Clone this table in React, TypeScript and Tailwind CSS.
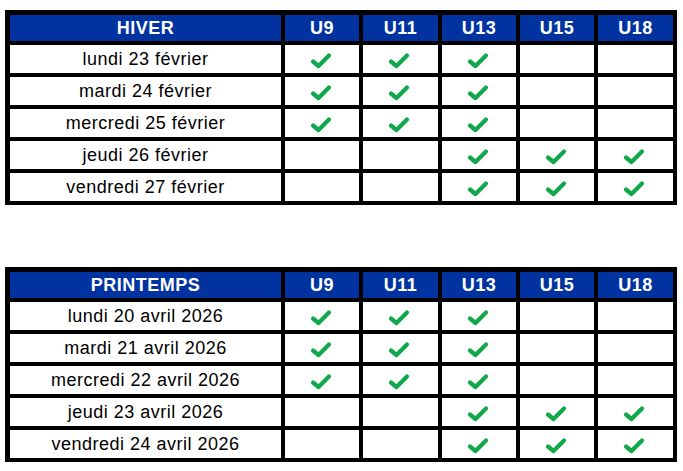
import { Fragment } from "react";

const seasons = [
  {
    title: "HIVER",
    rows: [
      { label: "lundi 23 février", days: [true, true, true, false, false] },
      { label: "mardi 24 février", days: [true, true, true, false, false] },
      { label: "mercredi 25 février", days: [true, true, true, false, false] },
      { label: "jeudi 26 février", days: [false, false, true, true, true] },
      { label: "vendredi 27 février", days: [false, false, true, true, true] },
    ],
  },
  {
    title: "PRINTEMPS",
    rows: [
      { label: "lundi 20 avril 2026", days: [true, true, true, false, false] },
      { label: "mardi 21 avril 2026", days: [true, true, true, false, false] },
      { label: "mercredi 22 avril 2026", days: [true, true, true, false, false] },
      { label: "jeudi 23 avril 2026", days: [false, false, true, true, true] },
      { label: "vendredi 24 avril 2026", days: [false, false, true, true, true] },
    ],
  },
];

const categories = ["U9", "U11", "U13", "U15", "U18"];

const Check = () => (
  <svg width="22" height="17" viewBox="0 0 22 17" className="mt-[3px] -ml-[3px]">
    <path
      d="M3 9.5 L8.5 14 L19 3.5"
      fill="none"
      stroke="#10a84a"
      strokeWidth="4.2"
      strokeLinecap="round"
      strokeLinejoin="round"
    />
  </svg>
);

const ScheduleTable = ({ title, rows }: (typeof seasons)[number]) => (
  <div className="w-[672px] bg-black border-black border-t-[5px] border-l-[5px] border-r-[4px] border-b-[4px] grid grid-cols-[271px_74px_75px_74px_74px_75px] grid-rows-[26px_repeat(5,28px)] gap-[4px] font-['Liberation_Sans',Arial,sans-serif] text-[18px] tracking-[0.5px]">
    <div className="bg-[#0033a0] text-white font-bold flex items-center justify-center">{title}</div>
    {categories.map((c) => (
      <div key={c} className="bg-[#0033a0] text-white font-bold flex items-center justify-center">
        {c}
      </div>
    ))}
    {rows.map((row) => (
      <Fragment key={row.label}>
        <div className="bg-white text-black flex items-center justify-center">{row.label}</div>
        {row.days.map((on, i) => (
          <div key={i} className="bg-white flex items-center justify-center">
            {on && <Check />}
          </div>
        ))}
      </Fragment>
    ))}
  </div>
);

export default function App() {
  return (
    <div className="w-[683px] h-[471px] bg-white pt-[10px] pl-[5px] flex flex-col gap-[62px] overflow-hidden">
      {seasons.map((s) => (
        <ScheduleTable key={s.title} {...s} />
      ))}
    </div>
  );
}
